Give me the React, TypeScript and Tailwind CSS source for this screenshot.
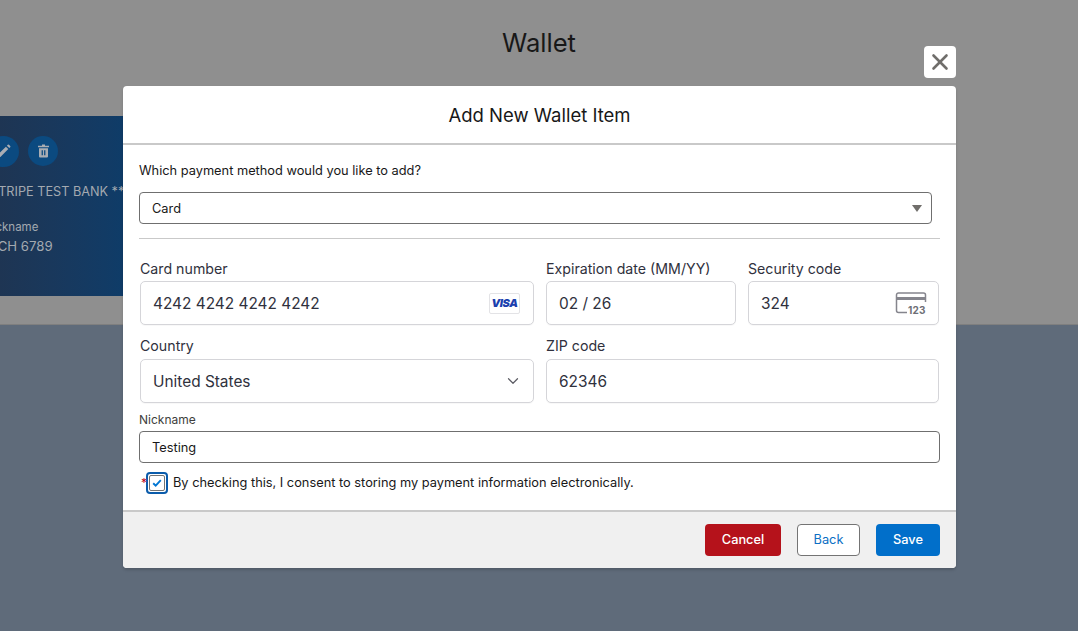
import { ChevronDown, X } from "lucide-react";

const font = { fontFamily: "Inter, 'Liberation Sans', sans-serif" };

function StripeField({
  label,
  value,
  className,
  tight,
  children,
}: {
  label: string;
  value: string;
  className: string;
  tight?: boolean;
  children?: React.ReactNode;
}) {
  return (
    <div className={className}>
      <div className={`text-[14.2px] text-[#30313d] ${tight ? "h-[24px] leading-[22px]" : "h-[24px] leading-[24px]"}`}>{label}</div>
      <div className="flex h-[44px] items-center justify-between rounded-[5px] border border-[#d5d5d9] bg-white pl-[12px] pr-[12px] text-[15.4px] text-[#30313d] shadow-[0_1px_1px_rgba(0,0,0,0.03)]">
        <span className="pt-[2px]">{value}</span>
        {children}
      </div>
    </div>
  );
}

function VisaBadge() {
  return (
    <span className="mr-px flex h-[21px] w-[31px] items-center justify-center rounded-[2px] border border-[#e3e3e6] bg-white text-[11px] font-black italic leading-none tracking-[-0.4px] text-[#1a3fae]">
      VISA
    </span>
  );
}

function CvcIcon() {
  return (
    <svg width="32" height="23" viewBox="0 0 32 23" fill="none" className="mr-[-1px]">
      <path d="M12 20.5H3.5a2 2 0 0 1-2-2V3a2 2 0 0 1 2-2h25a2 2 0 0 1 2 2v7" stroke="#85858d" strokeWidth="1.5" />
      <rect x="1" y="5" width="30" height="3" fill="#85858d" />
      <text x="13" y="21.5" fontSize="10" fontWeight="700" letterSpacing="0.2" fill="#6e6e76" fontFamily="Inter, sans-serif">
        123
      </text>
    </svg>
  );
}

export default function App() {
  return (
    <div className="relative h-[631px] w-[1078px] overflow-hidden bg-[#5f6b7a]" style={font}>
      {/* page behind the backdrop */}
      <div className="h-[325px] border-b border-[#7f7f7f] bg-[#8f8f8f]">
        <h1 className="pt-[26px] text-center text-[25.6px] leading-[34px] text-[#181818]">Wallet</h1>
        <div className="mt-[56px] h-[180px] w-[140px] overflow-hidden bg-gradient-to-r from-[#1e3553] to-[#0b3d6b] text-[#a3a9b0]">
          <div className="flex h-[65px] items-center pt-[5px]">
            <span className="ml-[-12px] flex h-[31px] w-[31px] items-center justify-center rounded-full bg-[#0b4a80]">
              <svg width="14" height="14" viewBox="0 0 14 14" fill="#a9adb3">
                <path d="M1 10.6 8.9 2.7l2.4 2.4-7.900 7.900H1zM9.900 1.700l.9-.9a.9.9 0 0 1 1.200 0l1.200 1.200a.9.9 0 0 1 0 1.200l-.9.9z" />
              </svg>
            </span>
            <span className="ml-[9px] flex h-[30px] w-[30px] items-center justify-center rounded-full bg-[#0b4a80]">
              <svg width="13" height="14" viewBox="0 0 13 14" fill="#a9adb3">
                <path d="M5 .6h3v1.200h4V3.200H1V1.800h4z" />
                <path fillRule="evenodd" d="M2 4.200h9v8.200a1 1 0 0 1-1 1H3a1 1 0 0 1-1-1zM4.600 6.200v5h1.300v-5zM7.100 6.200v5h1.300v-5z" />
              </svg>
            </span>
          </div>
          <div className="ml-[-10px] whitespace-nowrap pt-px text-[12.7px] leading-[20px]">STRIPE TEST BANK ****</div>
          <div className="ml-[-16px] mt-[18px] text-[11.5px] leading-[14px]">Nickname</div>
          <div className="ml-[-11px] mt-[3px] whitespace-nowrap text-[13.2px] leading-[18px]">ACH 6789</div>
        </div>
      </div>

      {/* close button */}
      <button className="absolute left-[924px] top-[46px] flex h-[32px] w-[32px] items-center justify-center rounded-[4px] bg-white text-[#706e6b]">
        <X size={26} strokeWidth={2.4} />
      </button>

      {/* modal */}
      <div className="absolute left-[123px] top-[86px] w-[833px] overflow-hidden rounded-[4px] bg-white shadow-[0_2px_3px_rgba(0,0,0,0.16)]">
        <div className="flex h-[59px] items-center justify-center border-b-2 border-[#c9c9c9] pt-[2px] text-[18.5px] text-[#181818]">
          Add New Wallet Item
        </div>

        <div className="h-[365px] px-[16px]">
          <p className="pt-[17px] text-[12.8px] leading-[18px] text-[#181818]">Which payment method would you like to add?</p>

          <div className="mt-[12px] flex h-[32px] w-[793px] items-center justify-between rounded-[4px] border border-[#6f6f6f] pl-[12px] pr-[9px] pt-[2px] text-[12.8px] text-[#181818]">
            Card
            <span className="mb-[2px] h-0 w-0 border-x-[5.5px] border-t-[7px] border-x-transparent border-t-[#706e6b]" />
          </div>

          <div className="mt-[14px] h-px w-[801px] bg-[#c9c9c9]" />

          <div className="ml-px mt-[18px] w-[799px]">
            <div className="flex gap-[12px]">
              <StripeField label="Card number" value="4242 4242 4242 4242" className="w-[394px]">
                <VisaBadge />
              </StripeField>
              <StripeField label="Expiration date (MM/YY)" value="02 / 26" className="w-[190px]" />
              <StripeField label="Security code" value="324" className="w-[191px]">
                <CvcIcon />
              </StripeField>
            </div>
            <div className="mt-[10px] flex gap-[12px]">
              <StripeField tight label="Country" value="United States" className="w-[394px]">
                <ChevronDown size={18} strokeWidth={1.6} className="mr-[-1px] text-[#5c5c64]" />
              </StripeField>
              <StripeField tight label="ZIP code" value="62346" className="w-[393px]" />
            </div>
          </div>

          <div className="mt-[8px] text-[12px] leading-[18px] text-[#3e3e3c]">Nickname</div>
          <div className="mt-[2px] flex h-[32px] w-[801px] items-center rounded-[4px] border border-[#6f6f6f] pl-[12px] pt-[2px] text-[12.8px] text-[#181818]">
            Testing
          </div>

          <div className="mt-[9px] flex h-[22px] items-center">
            <span className="relative w-[7px] pl-[2px] text-[12px] leading-none text-[#ba0517]">*</span>
            <span className="flex h-[22px] w-[22px] items-center justify-center rounded-[4px] border-2 border-[#0b5cab]">
              <span className="flex h-[16px] w-[16px] items-center justify-center rounded-[2px] border border-[#747474] bg-white">
                <svg width="10" height="8" viewBox="0 0 10 8" fill="none">
                  <path d="M1.2 4.2 3.7 6.600 8.800 1.200" stroke="#0176d3" strokeWidth="1.9" />
                </svg>
              </span>
            </span>
            <span className="ml-[5px] text-[12.8px] text-[#181818]">
              By checking this, I consent to storing my payment information electronically.
            </span>
          </div>
        </div>

        <div className="flex h-[58px] items-center justify-end gap-[16px] border-t-2 border-[#c9c9c9] bg-[#f0f0f0] pr-[16px] text-[12.8px] font-medium">
          <button className="h-[32px] w-[76px] rounded-[4px] bg-[#b5121b] text-white">Cancel</button>
          <button className="h-[32px] w-[63px] rounded-[4px] border border-[#747474] bg-white font-normal text-[#0b6fc4]">Back</button>
          <button className="h-[32px] w-[64px] rounded-[4px] bg-[#016fca] text-white">Save</button>
        </div>
      </div>
    </div>
  );
}
